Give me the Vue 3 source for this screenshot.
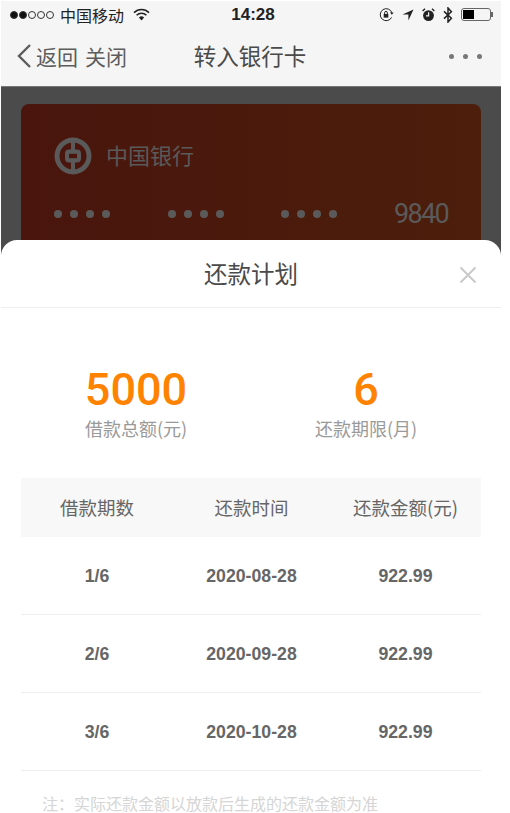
<script setup>
const groups = [1, 2, 3]
const plan = [
  { period: '1/6', date: '2020-08-28', amount: '922.99' },
  { period: '2/6', date: '2020-09-28', amount: '922.99' },
  { period: '3/6', date: '2020-10-28', amount: '922.99' }
]
</script>

<template>
  <div class="page">
    <div class="top">
      <div class="status">
        <div class="status__left">
          <span class="signal">
            <i class="on"></i><i class="on"></i><i></i><i></i><i></i>
          </span>
          <span class="carrier">中国移动</span>
          <svg class="wifi" width="17" height="13" viewBox="0 0 17 13">
            <path d="M1 4.6a10.6 10.6 0 0 1 15 0" fill="none" stroke="#222" stroke-width="1.6" />
            <path d="M3.6 7.2a7 7 0 0 1 9.8 0" fill="none" stroke="#222" stroke-width="1.6" />
            <path d="M8.5 12.4 5.9 9.6a3.7 3.7 0 0 1 5.2 0z" fill="#222" />
          </svg>
        </div>
        <span class="time">14:28</span>
        <div class="status__right">
          <svg width="15" height="14" viewBox="0 0 15 14">
            <path d="M12.6 9.4A6 6 0 1 1 13 5" fill="none" stroke="#222" stroke-width="1" />
            <path d="M11 4.6h3.6l-1.7 2.2z" fill="#222" />
            <rect x="4.7" y="6" width="4.6" height="3.6" fill="#222" />
            <path d="M5.6 6V4.8a1.4 1.4 0 0 1 2.8 0V6" fill="none" stroke="#222" stroke-width="1" />
          </svg>
          <svg width="12" height="12" viewBox="0 0 12 12">
            <path d="M11.5.5 6.4 11.5V5.6H.5z" fill="#222" />
          </svg>
          <svg width="13" height="14" viewBox="0 0 13 14">
            <circle cx="6.5" cy="7.6" r="5.4" fill="#222" />
            <path d="M6.6 4.2v3.6H4" fill="none" stroke="#f5f5f5" stroke-width="1.2" />
            <path d="M.6 3 3 .8M12.4 3 10 .8" stroke="#222" stroke-width="1.4" />
          </svg>
          <svg width="10" height="16" viewBox="0 0 10 16">
            <path d="M1 4.4l7.4 6.8L5 15V1l3.4 3.8L1 11.6" fill="none" stroke="#222" stroke-width="1.5" />
          </svg>
          <span class="battery"><span class="battery__level"></span></span>
        </div>
      </div>
      <div class="nav">
        <div class="nav__left">
          <svg width="16" height="26" viewBox="0 0 16 26">
            <path d="M14 2 3 13l11 11" fill="none" stroke="#5d5d5d" stroke-width="2.4" />
          </svg>
          <span>返回</span>
          <span class="nav__close">关闭</span>
        </div>
        <div class="nav__title">转入银行卡</div>
        <div class="nav__more"><i></i><i></i><i></i></div>
      </div>
    </div>

    <div class="backdrop">
      <div class="card">
        <div class="card__bank">
          <svg width="38" height="38" viewBox="0 0 38 38">
            <circle cx="19" cy="19" r="18.5" fill="#5a5a5a" />
            <circle cx="19" cy="19" r="13.5" fill="#49150d" />
            <path d="M19 5v28" stroke="#5a5a5a" stroke-width="4" />
            <rect x="11" y="12.5" width="16" height="13" rx="4" fill="#5a5a5a" />
            <rect x="15" y="16.8" width="8" height="4.4" fill="#49150d" />
          </svg>
          <span class="card__name">中国银行</span>
        </div>
        <div class="card__number">
          <div class="dots" v-for="g in groups" :key="g"><i></i><i></i><i></i><i></i></div>
          <span class="card__last">9840</span>
        </div>
      </div>
    </div>

    <div class="sheet">
      <div class="sheet__head">
        <span class="sheet__title">还款计划</span>
        <svg class="sheet__close" width="18" height="18" viewBox="0 0 18 18">
          <path d="M1.5 1.5l15 15M16.5 1.5l-15 15" stroke="#c9c9c9" stroke-width="2" />
        </svg>
      </div>

      <div class="summary">
        <div class="summary__item">
          <div class="summary__num">5000</div>
          <div class="summary__label">借款总额(元)</div>
        </div>
        <div class="summary__item">
          <div class="summary__num">6</div>
          <div class="summary__label">还款期限(月)</div>
        </div>
      </div>

      <div class="table">
        <div class="row row--head">
          <span>借款期数</span><span>还款时间</span><span>还款金额(元)</span>
        </div>
        <div class="row" v-for="p in plan" :key="p.period">
          <span>{{ p.period }}</span><span>{{ p.date }}</span><span>{{ p.amount }}</span>
        </div>
      </div>

      <div class="note">注：实际还款金额以放款后生成的还款金额为准</div>
    </div>
  </div>
</template>

<style scoped>
.page {
  width: 500px;
  height: 813px;
  margin-left: 1px;
  overflow: hidden;
  font-family: "Noto Sans CJK SC", "Liberation Sans", sans-serif;
}
.top {
  margin-top: 1px;
  background: #f5f5f5;
}
.status {
  height: 27px;
  padding: 0 10px 0 9px;
  display: grid;
  grid-template-columns: 1fr auto 1fr;
  align-items: center;
}
.status__left {
  display: flex;
  align-items: center;
}
.signal {
  display: flex;
  gap: 1px;
  margin-right: 6px;
}
.signal i {
  width: 8px;
  height: 8px;
  box-sizing: border-box;
  border: 1px solid #333;
  border-radius: 50%;
}
.signal .on {
  background: #111;
}
.carrier {
  font-size: 16px;
  color: #222;
}
.wifi {
  margin-left: 9px;
}
.time {
  margin-left: 5px;
  font: 700 17px "Liberation Sans", sans-serif;
  color: #222;
}
.status__right {
  display: flex;
  align-items: center;
  justify-content: flex-end;
  gap: 8px;
}
.battery {
  position: relative;
  width: 30px;
  height: 13px;
  box-sizing: border-box;
  border: 1px solid #666;
  border-radius: 3px;
  padding: 1px;
  display: flex;
}
.battery::after {
  content: "";
  position: absolute;
  right: -3px;
  top: 3px;
  width: 2px;
  height: 5px;
  background: #666;
}
.battery__level {
  width: 11px;
  background: #000;
}
.nav {
  position: relative;
  height: 58px;
  box-sizing: border-box;
  padding: 0 19px 2px 15px;
  display: flex;
  align-items: center;
  justify-content: space-between;
}
.nav__left {
  display: flex;
  align-items: center;
  gap: 4px;
  font-size: 21px;
  color: #5d5d5d;
}
.nav__close {
  margin-left: 3px;
}
.nav__title {
  position: absolute;
  left: 0;
  right: 2px;
  margin-bottom: 2px;
  text-align: center;
  font-size: 22.5px;
  color: #4a4a4a;
}
.nav__more {
  display: flex;
  gap: 9px;
}
.nav__more i {
  width: 5px;
  height: 5px;
  border-radius: 50%;
  background: #777;
}
.backdrop {
  height: 170px;
  padding: 17px 20px 0;
  background: #4b4b4b;
  border-top: 1px solid #777;
  box-sizing: border-box;
}
.card {
  height: 153px;
  box-sizing: border-box;
  padding: 33px 33px 0;
  border-radius: 8px;
  background: linear-gradient(90deg, #49150d, #4c1e0b);
}
.card__bank {
  display: flex;
  align-items: center;
  gap: 14px;
  font-size: 22px;
  color: #5a5a5a;
}
.card__name {
  margin-bottom: 4px;
}
.card__number {
  display: flex;
  align-items: center;
  margin-top: 23px;
}
.dots {
  display: flex;
  gap: 8px;
  width: 114px;
}
.dots i {
  width: 8px;
  height: 8px;
  border-radius: 50%;
  background: #5a5a5a;
}
.card__last {
  font: 400 27px "Roboto", sans-serif;
  letter-spacing: -1.7px;
  color: #5a5a5a;
  margin-left: -1px;
}
.sheet {
  position: relative;
  margin-top: -16px;
  border-radius: 16px 16px 0 0;
  background: #fff;
}
.sheet__head {
  position: relative;
  height: 68px;
  box-sizing: border-box;
  padding-bottom: 2px;
  display: flex;
  align-items: center;
  justify-content: center;
  border-bottom: 1px solid #eee;
}
.sheet__title {
  font-size: 23.5px;
  color: #4a4a4a;
}
.sheet__close {
  position: absolute;
  right: 24px;
  top: 26px;
}
.summary {
  display: grid;
  grid-template-columns: 1fr 1fr;
  padding: 57px 20px 0;
  text-align: center;
}
.summary__num {
  font: 500 45px/50px "Roboto", sans-serif;
  color: #ff8200;
}
.summary__label {
  font-size: 18px;
  line-height: 27px;
  color: #9a9a9a;
}
.table {
  margin: 36px 20px 0;
}
.row {
  display: grid;
  grid-template-columns: 154px 153px 153px;
  height: 78px;
  padding-top: 2px;
  align-items: center;
  text-align: center;
  border-bottom: 1px solid #eee;
  box-sizing: border-box;
  font: 700 17.7px "Liberation Sans", sans-serif;
  color: #666;
}
.row span:first-child {
  padding-right: 2px;
}
.row span:last-child {
  padding-left: 2px;
}
.row--head {
  height: 59px;
  padding-top: 0;
  padding-bottom: 2px;
  background: #f8f8f8;
  border-bottom: 0;
  font: 400 18.5px "Noto Sans CJK SC", sans-serif;
  color: #666;
}
.note {
  padding: 23px 0 0 41px;
  font-size: 16px;
  line-height: 18px;
  color: #d5d5d5;
}
</style>

<style>
html,
body {
  background: #fff;
}
</style>
